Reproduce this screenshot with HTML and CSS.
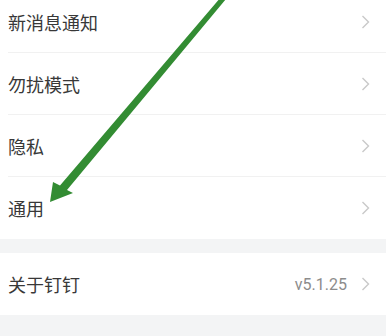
FILE: index.html
```html
<!DOCTYPE html>
<html lang="zh-CN">
<head>
<meta charset="utf-8">
<title>设置</title>
<link rel="stylesheet" href="styles.css">
</head>
<body>
<div class="page">
  <div class="group group-first">
    <div class="row"><span class="label">新消息通知</span><span class="end"><svg class="chev" viewBox="0 0 8 14"><polyline points="1,1 7,7 1,13"/></svg></span></div>
    <div class="row"><span class="label">勿扰模式</span><span class="end"><svg class="chev" viewBox="0 0 8 14"><polyline points="1,1 7,7 1,13"/></svg></span></div>
    <div class="row"><span class="label">隐私</span><span class="end"><svg class="chev" viewBox="0 0 8 14"><polyline points="1,1 7,7 1,13"/></svg></span></div>
    <div class="row"><span class="label">通用</span><span class="end"><svg class="chev" viewBox="0 0 8 14"><polyline points="1,1 7,7 1,13"/></svg></span></div>
  </div>
  <div class="group">
    <div class="row"><span class="label">关于钉钉</span><span class="end"><span class="value">v5.1.25</span><svg class="chev" viewBox="0 0 8 14"><polyline points="1,1 7,7 1,13"/></svg></span></div>
  </div>
  <svg class="arrow" viewBox="0 0 386 336" width="386" height="336">
    <polygon points="50,202 53,182 60,185.5 221,-3 226,-1 67,190 73,193"/>
  </svg>
</div>
</body>
</html>
```
FILE: styles.css
```css
html, body {
  margin: 0;
  padding: 0;
  background: #f3f4f5;
}
body {
  width: 386px;
  height: 336px;
  overflow: hidden;
  font-family: "Noto Sans CJK SC", "Noto Sans", sans-serif;
}
.page {
  position: relative;
  width: 386px;
  height: 336px;
  display: flex;
  flex-direction: column;
  gap: 14px;
}
.group {
  background: #fff;
  display: flex;
  flex-direction: column;
}
.group-first {
  margin-top: -9px;
}
.row {
  box-sizing: border-box;
  height: 62px;
  display: flex;
  align-items: center;
  justify-content: space-between;
  margin-left: 8px;
  padding-right: 16px;
  border-bottom: 1px solid #f1f1f1;
}
.row:last-child {
  border-bottom: none;
}
.label {
  font-size: 18px;
  color: #383838;
  line-height: 1;
}
.end {
  display: flex;
  align-items: center;
  gap: 14px;
}
.value {
  font-family: Roboto, "Noto Sans", sans-serif;
  font-size: 16px;
  color: #8c8c8c;
}
.chev {
  width: 9px;
  height: 14px;
  fill: none;
  stroke: #c9c9c9;
  stroke-width: 1.4;
}
.arrow {
  position: absolute;
  left: 0;
  top: 0;
  fill: #338c33;
}
```
